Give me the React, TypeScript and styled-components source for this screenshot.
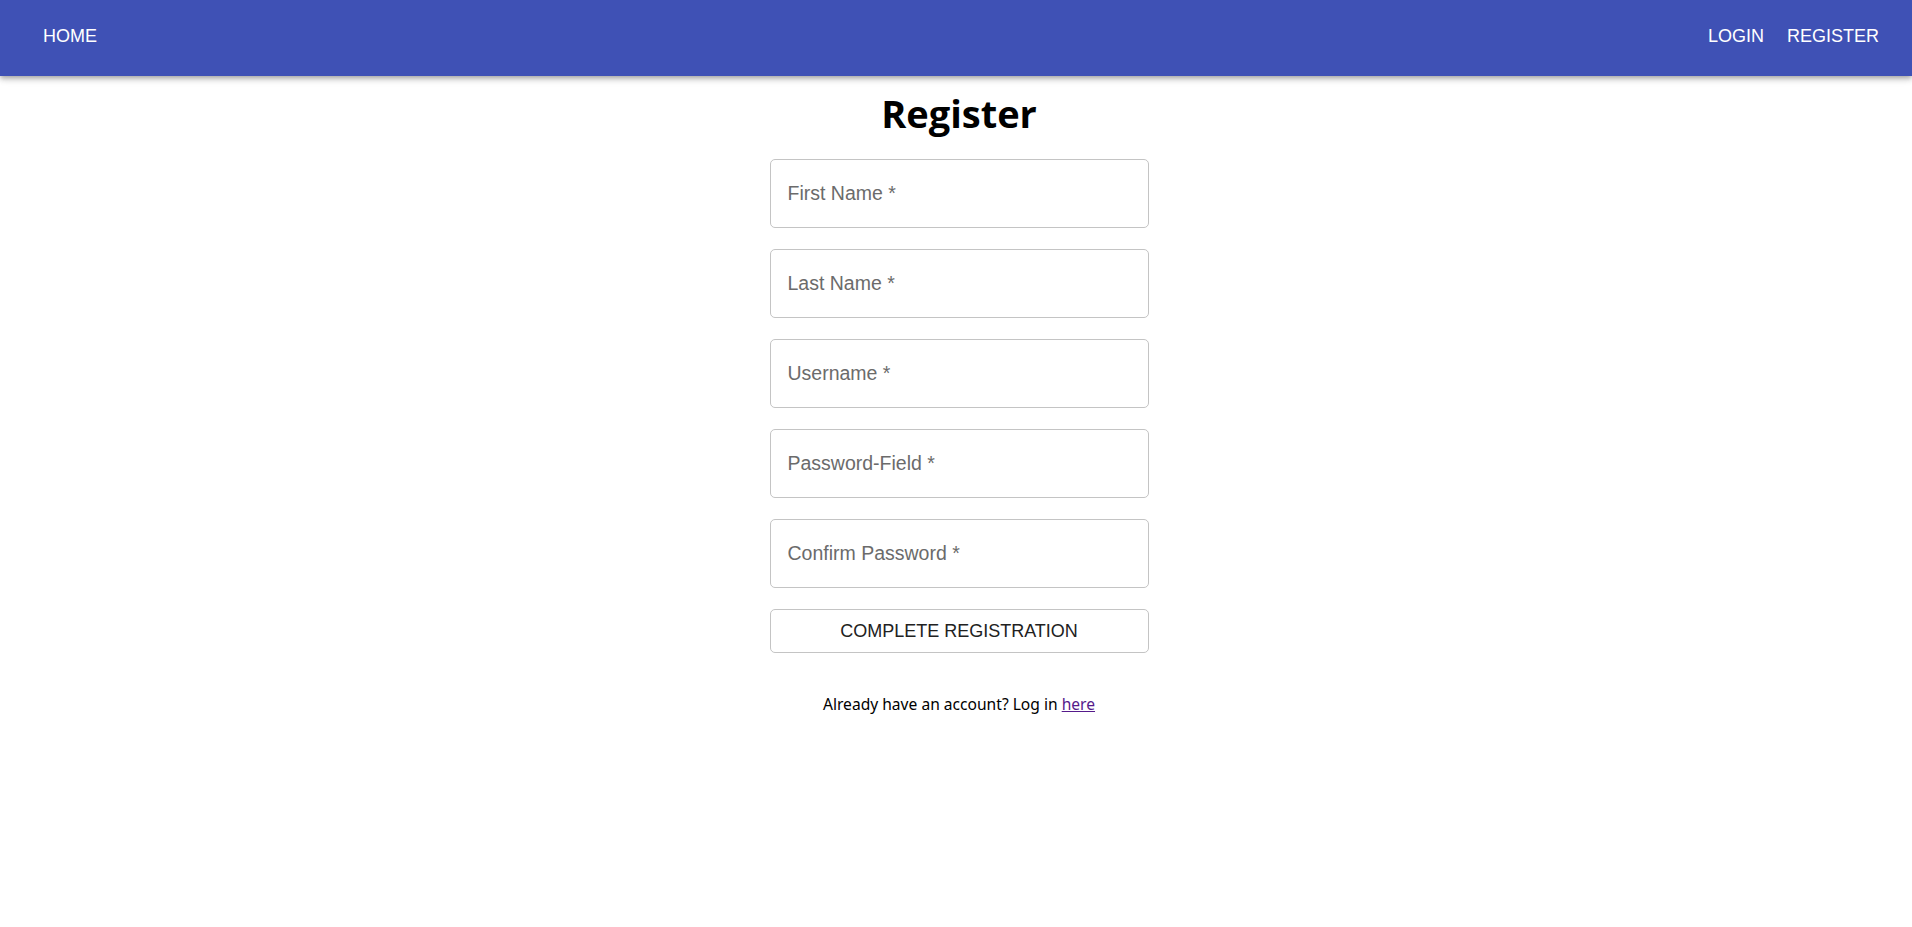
import React from "react";
import styled, { createGlobalStyle } from "styled-components";

const GlobalStyle = createGlobalStyle`
  html, body { margin: 0; padding: 0; background: #ffffff; }
  body { font-family: "Liberation Sans", Arial, sans-serif; }
  * { box-sizing: border-box; }
`;

const AppBar = styled.header`
  height: 76px;
  background: #3f51b5;
  box-shadow: 0px 2px 4px -1px rgba(0,0,0,0.2), 0px 4px 5px 0px rgba(0,0,0,0.14), 0px 1px 10px 0px rgba(0,0,0,0.12);
  display: flex;
  align-items: center;
  justify-content: space-between;
  padding: 0 33px 4px 43px;
  position: relative;
  z-index: 1;
`;

const NavGroup = styled.nav`
  display: flex;
  align-items: center;
  gap: 23px;
`;

const NavButton = styled.a`
  font-family: "Liberation Sans", Arial, sans-serif;
  font-size: 18px;
  color: #ffffff;
  text-transform: uppercase;
  text-decoration: none;
  line-height: 1;
  cursor: pointer;
`;

const Main = styled.main`
  display: flex;
  flex-direction: column;
  align-items: center;
  padding-left: 6px;
`;

const Title = styled.h1`
  font-family: "Open Sans", "Noto Sans", sans-serif;
  font-weight: 700;
  font-size: 38px;
  line-height: 48px;
  margin: 13px 0 22px;
  color: #000000;
`;

const Form = styled.form`
  width: 379px;
  display: flex;
  flex-direction: column;
  gap: 21px;
`;

const Field = styled.input`
  height: 69px;
  width: 100%;
  border: 1px solid #c4c4c4;
  border-radius: 5px;
  padding: 0 17px;
  font-family: "Liberation Sans", Arial, sans-serif;
  font-size: 19.5px;
  color: #212121;
  background: #ffffff;
  outline: none;
  &::placeholder {
    color: #6b6b6b;
    opacity: 1;
  }
`;

const SubmitButton = styled.button`
  height: 44px;
  width: 100%;
  border: 1px solid #c4c4c4;
  border-radius: 5px;
  background: #ffffff;
  font-family: "Liberation Sans", Arial, sans-serif;
  font-size: 18px;
  color: #212121;
  text-transform: uppercase;
  cursor: pointer;
`;

const Footer = styled.p`
  font-family: "Noto Sans", "Open Sans", sans-serif;
  font-size: 15.6px;
  color: #000000;
  margin: 40px 0 0;
  text-align: center;
`;

const Link = styled.a`
  color: #551a8b;
  text-decoration: underline;
`;

const fields = [
  { name: "firstName", label: "First Name *", type: "text" },
  { name: "lastName", label: "Last Name *", type: "text" },
  { name: "username", label: "Username *", type: "text" },
  { name: "password", label: "Password-Field *", type: "password" },
  { name: "confirm", label: "Confirm Password *", type: "password" },
];

export default function App() {
  return (
    <>
      <GlobalStyle />
      <AppBar>
        <NavGroup>
          <NavButton>Home</NavButton>
        </NavGroup>
        <NavGroup>
          <NavButton>Login</NavButton>
          <NavButton>Register</NavButton>
        </NavGroup>
      </AppBar>
      <Main>
        <Title>Register</Title>
        <Form onSubmit={(e) => e.preventDefault()}>
          {fields.map((f) => (
            <Field key={f.name} name={f.name} type={f.type} placeholder={f.label} />
          ))}
          <SubmitButton type="submit">Complete Registration</SubmitButton>
        </Form>
        <Footer>
          Already have an account? Log in <Link href="#">here</Link>
        </Footer>
      </Main>
    </>
  );
}
